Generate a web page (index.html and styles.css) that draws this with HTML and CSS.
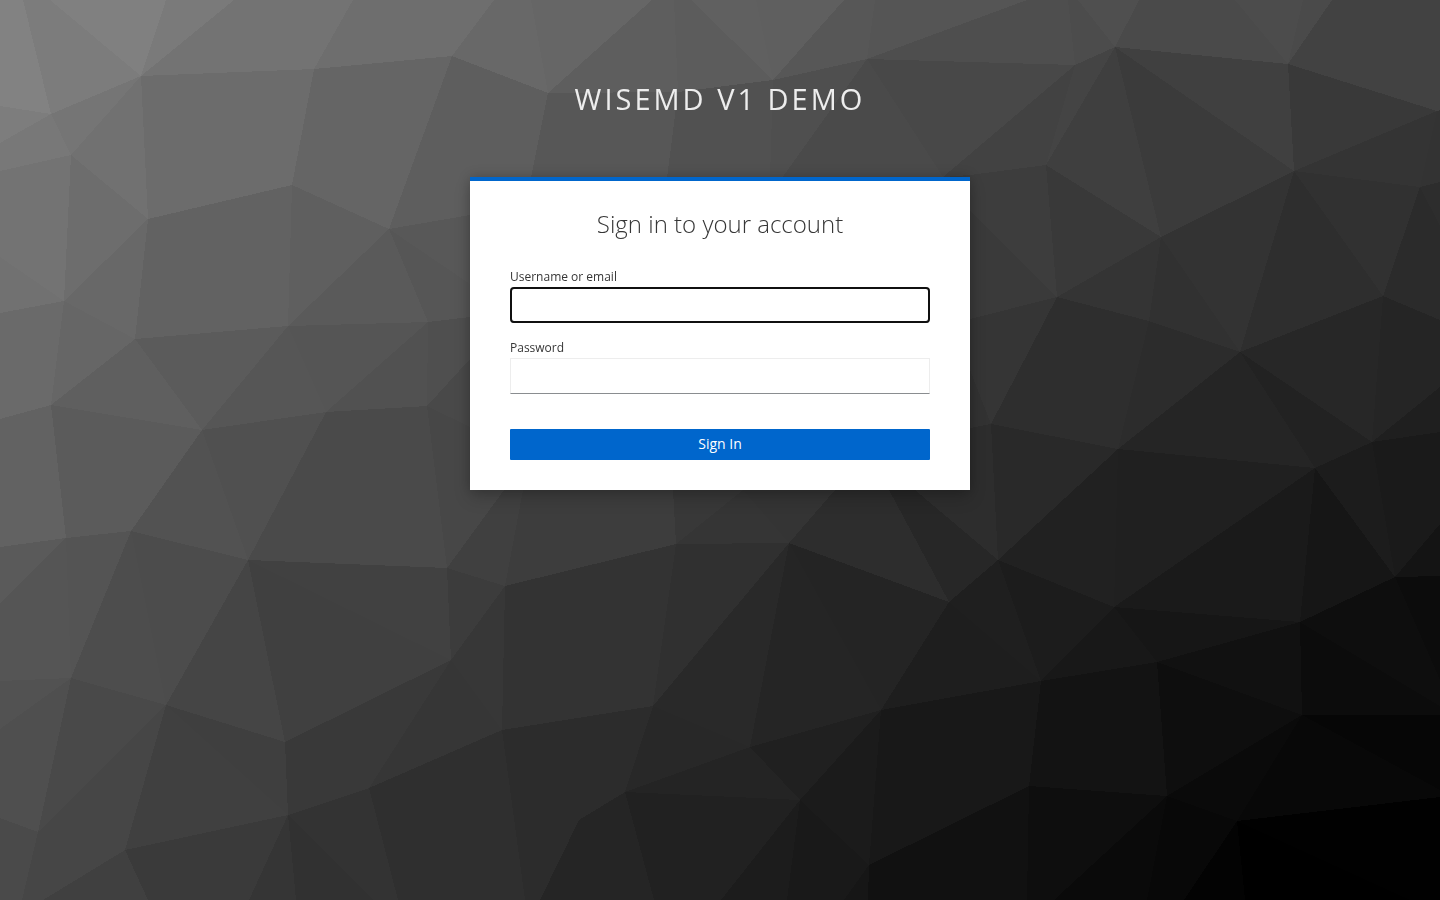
FILE: index.html
```html
<!DOCTYPE html>
<html lang="en">
<head>
<meta charset="utf-8">
<meta name="viewport" content="width=device-width, initial-scale=1">
<title>Sign in to WiseMD v1 Demo</title>
<link rel="stylesheet" href="styles.css">
</head>
<body>
<svg class="backdrop" viewBox="0 0 1440 900" preserveAspectRatio="xMidYMid slice" aria-hidden="true">
<!-- first row -->
<polygon fill="#828282" points="0,0 23,0 51,114 0,106"/>
<polygon fill="#7c7c7c" points="23,0 50,0 141,76 51,114"/>
<polygon fill="#808080" points="50,0 166,0 141,76"/>
<polygon fill="#7a7a7a" points="166,0 234,0 141,76"/>
<polygon fill="#737373" points="234,0 353,0 314,69 141,76"/>
<polygon fill="#6e6e6e" points="353,0 494,0 452,56 314,69"/>
<polygon fill="#686868" points="494,0 531,0 548,93 452,56"/>
<polygon fill="#666666" points="531,0 652,0 548,93"/>
<polygon fill="#5e5e5e" points="652,0 674,0 678,92 548,93"/>
<polygon fill="#5c5c5c" points="674,0 691,0 773,80 678,92"/>
<polygon fill="#606060" points="691,0 756,0 773,80"/>
<polygon fill="#5f5f5f" points="756,0 844,0 773,80"/>
<polygon fill="#575757" points="844,0 875,0 867,59 773,80"/>
<polygon fill="#555555" points="875,0 1027,0 867,59"/>
<polygon fill="#4e4e4e" points="1027,0 1068,0 1075,65 867,59"/>
<polygon fill="#4c4c4c" points="1068,0 1078,0 1115,47 1075,65"/>
<polygon fill="#4f4f4f" points="1078,0 1139,0 1115,47"/>
<polygon fill="#4a4a4a" points="1139,0 1235,0 1288,64 1115,47"/>
<polygon fill="#4c4c4c" points="1235,0 1303,0 1288,64"/>
<polygon fill="#4a4a4a" points="1303,0 1332,0 1288,64"/>
<polygon fill="#424242" points="1332,0 1440,0 1440,110 1437,111 1288,64"/>
<!-- second row -->
<polygon fill="#7d7d7d" points="0,106 51,114 0,143"/>
<polygon fill="#787878" points="0,143 51,114 71,155 0,171"/>
<polygon fill="#757575" points="141,76 51,114 71,155"/>
<polygon fill="#717171" points="141,76 71,155 148,219"/>
<polygon fill="#737373" points="0,171 71,155 64,301 0,257"/>
<polygon fill="#717171" points="0,257 64,301 0,313"/>
<polygon fill="#6d6d6d" points="71,155 148,219 64,301"/>
<polygon fill="#686868" points="148,219 64,301 135,339"/>
<polygon fill="#6c6c6c" points="141,76 314,69 292,185 148,219"/>
<polygon fill="#656565" points="314,69 452,56 389,229 292,185"/>
<polygon fill="#626262" points="148,219 292,185 288,326 135,339"/>
<polygon fill="#5f5f5f" points="292,185 389,229 288,326"/>
<polygon fill="#5a5a5a" points="389,229 428,322 288,326"/>
<polygon fill="#5e5e5e" points="452,56 548,93 531,178 531,205 470,215 389,229"/>
<polygon fill="#575757" points="548,93 678,92 667,178 667,250 531,250 531,178"/>
<polygon fill="#515151" points="678,92 773,80 770,178 770,250 667,250 667,178"/>
<polygon fill="#4f4f4f" points="773,80 867,59 782,178 770,250 770,178"/>
<polygon fill="#4a4a4a" points="867,59 943,177 943,184 782,184 782,178"/>
<polygon fill="#484848" points="867,59 1075,65 943,177"/>
<polygon fill="#424242" points="1075,65 1046,165 970,175 943,177"/>
<polygon fill="#444444" points="1075,65 1115,47 1046,165"/>
<polygon fill="#3f3f3f" points="1115,47 1161,237 1046,165"/>
<polygon fill="#3b3b3b" points="1115,47 1294,171 1161,237"/>
<polygon fill="#404040" points="1115,47 1288,64 1294,171"/>
<polygon fill="#393939" points="1288,64 1437,111 1294,171"/>
<polygon fill="#343434" points="1437,111 1420,187 1294,171"/>
<polygon fill="#333333" points="1437,111 1440,110 1440,182 1420,187"/>
<!-- third row -->
<polygon fill="#585858" points="389,229 470,215 470,284"/>
<polygon fill="#565656" points="389,229 470,284 470,317 428,322"/>
<polygon fill="#3d3d3d" points="1046,165 1057,297 970,211 943,184 943,177 970,175"/>
<polygon fill="#3a3a3a" points="970,211 1057,297 970,319"/>
<polygon fill="#393939" points="1046,165 1161,237 1057,297"/>
<polygon fill="#343434" points="1161,237 1149,321 1057,297"/>
<polygon fill="#313131" points="1161,237 1240,352 1149,321"/>
<polygon fill="#333333" points="1161,237 1294,171 1240,352"/>
<polygon fill="#2e2e2e" points="1294,171 1383,296 1240,352"/>
<polygon fill="#313131" points="1294,171 1420,187 1383,296"/>
<polygon fill="#2d2d2d" points="1420,187 1440,182 1440,226"/>
<polygon fill="#2b2b2b" points="1420,187 1440,226 1440,320 1383,296"/>
<polygon fill="#353535" points="970,319 1057,297 991,424 970,370"/>
<polygon fill="#323232" points="970,370 991,424 970,428"/>
<polygon fill="#2e2e2e" points="1057,297 1149,321 1118,449 991,424"/>
<polygon fill="#2c2c2c" points="1149,321 1240,352 1118,449"/>
<polygon fill="#252525" points="1240,352 1315,468 1118,449"/>
<polygon fill="#222222" points="1240,352 1372,442 1315,468"/>
<polygon fill="#272727" points="1240,352 1383,296 1372,442"/>
<polygon fill="#252525" points="1383,296 1440,320 1440,387 1372,442"/>
<polygon fill="#1f1f1f" points="1440,387 1440,432 1372,442"/>
<polygon fill="#1a1a1a" points="1372,442 1440,432 1440,524 1395,577"/>
<polygon fill="#1c1c1c" points="1372,442 1395,577 1315,468"/>
<polygon fill="#141414" points="1440,524 1440,576 1395,577"/>
<!-- left middle -->
<polygon fill="#6a6a6a" points="0,313 64,301 51,405 0,419"/>
<polygon fill="#666666" points="64,301 135,339 51,405"/>
<polygon fill="#5f5f5f" points="135,339 202,430 51,405"/>
<polygon fill="#5b5b5b" points="135,339 288,326 202,430"/>
<polygon fill="#565656" points="288,326 326,412 202,430"/>
<polygon fill="#555555" points="288,326 428,322 326,412"/>
<polygon fill="#515151" points="428,322 427,406 326,412"/>
<polygon fill="#4f4f4f" points="428,322 470,317 470,359 427,406"/>
<polygon fill="#494949" points="427,406 470,359 470,427"/>
<polygon fill="#474747" points="427,406 470,427 504,490 447,568"/>
<polygon fill="#4a4a4a" points="326,412 427,406 447,568 248,560"/>
<polygon fill="#505050" points="202,430 326,412 248,560"/>
<polygon fill="#525252" points="202,430 248,560 131,531"/>
<polygon fill="#5b5b5b" points="51,405 202,430 131,531 66,538"/>
<polygon fill="#626262" points="0,419 51,405 66,538 0,547"/>
<polygon fill="#5a5a5a" points="0,547 66,538 0,603"/>
<polygon fill="#555555" points="0,603 66,538 71,678 0,681"/>
<polygon fill="#545454" points="66,538 131,531 71,678"/>
<polygon fill="#4d4d4d" points="131,531 166,705 71,678"/>
<polygon fill="#4c4c4c" points="131,531 248,560 166,705"/>
<polygon fill="#454545" points="248,560 285,742 166,705"/>
<polygon fill="#404040" points="248,560 451,660 285,742"/>
<polygon fill="#414141" points="248,560 447,568 451,660"/>
<polygon fill="#3c3c3c" points="447,568 505,586 451,660"/>
<!-- centre -->
<polygon fill="#404040" points="504,490 523,490 505,586 447,568"/>
<polygon fill="#3d3d3d" points="523,490 673,490 676,544 505,586"/>
<polygon fill="#383838" points="673,490 743,490 676,544"/>
<polygon fill="#353535" points="743,490 789,543 676,544"/>
<polygon fill="#343434" points="743,490 835,490 789,543"/>
<polygon fill="#2d2d2d" points="835,490 889,490 949,602 789,543"/>
<polygon fill="#272727" points="889,490 915,490 998,560 949,602"/>
<polygon fill="#2d2d2d" points="915,490 970,428 991,424 998,560"/>
<polygon fill="#292929" points="991,424 1118,449 998,560"/>
<polygon fill="#212121" points="1118,449 1114,607 998,560"/>
<polygon fill="#202020" points="1118,449 1315,468 1114,607"/>
<polygon fill="#1a1a1a" points="1315,468 1300,622 1114,607"/>
<polygon fill="#161616" points="1315,468 1395,577 1300,622"/>
<polygon fill="#333333" points="505,586 676,544 653,706 502,730"/>
<polygon fill="#373737" points="505,586 502,730 451,660"/>
<polygon fill="#303030" points="676,544 789,543 653,706"/>
<polygon fill="#292929" points="789,543 750,747 653,706"/>
<polygon fill="#252525" points="789,543 881,710 750,747"/>
<polygon fill="#242424" points="789,543 949,602 881,710"/>
<polygon fill="#1e1e1e" points="949,602 1041,681 881,710"/>
<polygon fill="#1f1f1f" points="949,602 998,560 1041,681"/>
<polygon fill="#1c1c1c" points="998,560 1114,607 1041,681"/>
<polygon fill="#181818" points="1114,607 1157,662 1041,681"/>
<polygon fill="#161616" points="1114,607 1300,622 1157,662"/>
<polygon fill="#111111" points="1300,622 1302,715 1157,662"/>
<polygon fill="#0e0e0e" points="1300,622 1395,577 1440,680 1440,706"/>
<polygon fill="#0c0c0c" points="1395,577 1440,576 1440,680"/>
<polygon fill="#0c0c0c" points="1300,622 1440,706 1440,715 1302,715"/>
<!-- bottom -->
<polygon fill="#525252" points="0,681 71,678 0,729"/>
<polygon fill="#4f4f4f" points="0,729 71,678 38,832 0,818"/>
<polygon fill="#494949" points="71,678 166,705 38,832"/>
<polygon fill="#464646" points="166,705 125,850 38,832"/>
<polygon fill="#4a4a4a" points="0,818 38,832 22,900 0,900"/>
<polygon fill="#464646" points="38,832 125,850 43,900 22,900"/>
<polygon fill="#404040" points="125,850 148,900 43,900"/>
<polygon fill="#404040" points="166,705 288,815 125,850"/>
<polygon fill="#3f3f3f" points="166,705 285,742 288,815"/>
<polygon fill="#3a3a3a" points="125,850 288,815 249,900 148,900"/>
<polygon fill="#353535" points="288,815 296,900 249,900"/>
<polygon fill="#313131" points="288,815 373,900 296,900"/>
<polygon fill="#333333" points="288,815 369,788 398,900 373,900"/>
<polygon fill="#393939" points="285,742 451,660 369,788 288,815"/>
<polygon fill="#363636" points="451,660 502,730 369,788"/>
<polygon fill="#2f2f2f" points="369,788 502,730 525,900 398,900"/>
<polygon fill="#2c2c2c" points="502,730 653,706 625,792 579,820 540,900 525,900"/>
<polygon fill="#282828" points="653,706 750,747 625,792"/>
<polygon fill="#242424" points="750,747 800,800 625,792"/>
<polygon fill="#202020" points="750,747 881,710 800,800"/>
<polygon fill="#252525" points="625,792 654,900 540,900 579,820"/>
<polygon fill="#212121" points="625,792 800,800 721,900 654,900"/>
<polygon fill="#1c1c1c" points="800,800 787,900 721,900"/>
<polygon fill="#191919" points="800,800 869,865 844,900 787,900"/>
<polygon fill="#1b1b1b" points="881,710 869,865 800,800"/>
<polygon fill="#161616" points="869,865 868,900 844,900"/>
<polygon fill="#181818" points="881,710 1041,681 1029,786 869,865"/>
<polygon fill="#111111" points="869,865 1029,786 1027,900 868,900"/>
<polygon fill="#131313" points="1041,681 1157,662 1167,796 1029,786"/>
<polygon fill="#0e0e0e" points="1157,662 1302,715 1167,796"/>
<polygon fill="#0e0e0e" points="1029,786 1167,796 1054,900 1027,900"/>
<polygon fill="#0a0a0a" points="1167,796 1147,900 1054,900"/>
<polygon fill="#080808" points="1167,796 1237,821 1184,900 1147,900"/>
<polygon fill="#0a0a0a" points="1302,715 1237,821 1167,796"/>
<polygon fill="#060606" points="1302,715 1440,715 1440,790"/>
<polygon fill="#080808" points="1302,715 1440,790 1440,797 1237,821"/>
<polygon fill="#030303" points="1237,821 1245,900 1184,900"/>
<polygon fill="#000000" points="1237,821 1410,900 1245,900"/>
<polygon fill="#010101" points="1237,821 1440,797 1440,900 1410,900"/>
</svg>
<div class="login">
  <header class="login-header">WiseMD v1 Demo</header>
  <main class="card">
    <h1 class="card-title">Sign in to your account</h1>
    <form class="form">
      <div class="field">
        <label class="label" for="username">Username or email</label>
        <input class="input" id="username" name="username" type="text" autocomplete="off" autofocus>
      </div>
      <div class="field">
        <label class="label" for="password">Password</label>
        <input class="input" id="password" name="password" type="password" autocomplete="off">
      </div>
      <button class="submit" type="submit">Sign In</button>
    </form>
  </main>
</div>
</body>
</html>
```
FILE: styles.css
```css
* { box-sizing: border-box; }

body {
  margin: 0;
  min-height: 100vh;
  font-family: "Open Sans", "Noto Sans", sans-serif;
  color: #363636;
  background: linear-gradient(130deg, #808080, #3a3a3a 50%, #000);
}

.backdrop {
  position: fixed;
  inset: 0;
  z-index: -1;
  width: 100%;
  height: 100%;
  shape-rendering: crispEdges;
}

.login {
  display: flex;
  flex-direction: column;
  align-items: center;
}

.login-header {
  padding: 81px 10px 61px;
  font-size: 29px;
  line-height: 35px;
  letter-spacing: 3px;
  text-transform: uppercase;
  text-align: center;
  color: #ededed;
}

.card {
  width: 100%;
  max-width: 500px;
  padding: 27px 40px 30px;
  border-top: 4px solid #06c;
  background: #fff;
  box-shadow: 0 8px 16px rgba(3, 3, 3, 0.16), 0 0 12px rgba(3, 3, 3, 0.2);
}

.card-title {
  margin: 0 0 29px;
  font-size: 24px;
  font-weight: 300;
  line-height: 32px;
  text-align: center;
}

.form {
  display: flex;
  flex-direction: column;
}

.field {
  display: flex;
  flex-direction: column;
  margin-bottom: 17px;
}

.label {
  padding-bottom: 2px;
  font-size: 12px;
  line-height: 16px;
}

.input {
  width: 100%;
  height: 36px;
  padding: 5px 8px;
  border: 1px solid #ededed;
  border-bottom-color: #8a8d90;
  border-radius: 0;
  background: #fff;
  font: inherit;
  font-size: 16px;
}

.input:focus {
  border-radius: 4px;
  outline: 2px solid #101010;
  outline-offset: -2px;
}

.submit {
  height: 31px;
  margin-top: 18px;
  padding: 0 0 2px;
  border: 0;
  border-radius: 1px;
  background: #06c;
  color: #fff;
  font: inherit;
  font-size: 14px;
  line-height: 21px;
}
```
